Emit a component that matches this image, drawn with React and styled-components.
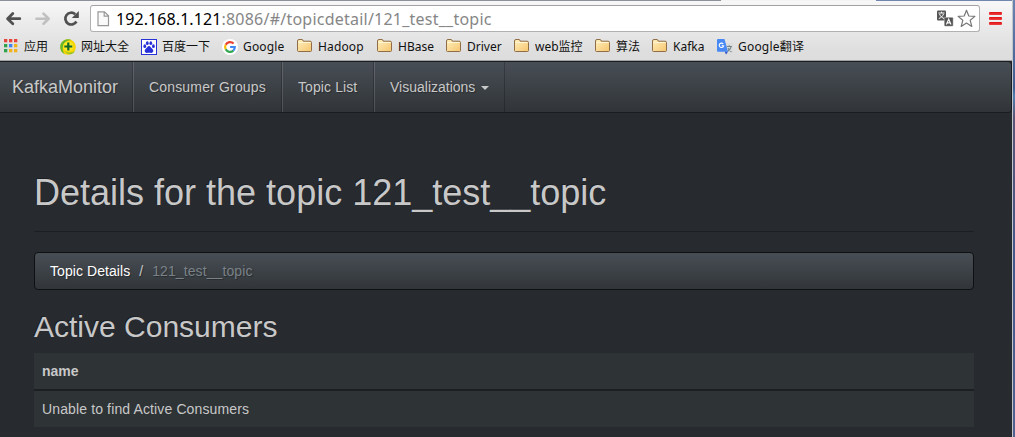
import React from 'react';
import styled, { createGlobalStyle } from 'styled-components';

const Global = createGlobalStyle`
  * { box-sizing: border-box; }
  html, body { margin: 0; padding: 0; overflow: hidden; background: #272b30; }
`;

const slate = 'linear-gradient(#484e55, #3a3f44 60%, #313539)';
const uiFont = '"Noto Sans", "Noto Sans CJK SC", sans-serif';

const Desktop = styled.div`
  width: 1015px;
  height: 437px;
  display: flex;
  padding-right: 1px;
  background: linear-gradient(#6b84b0, #3f5d92 20%, #4d7fb0 22%, #5a5475 27%, #46588a 60%, #52618e);
`;

const Window = styled.div`
  width: 1013px;
  height: 437px;
  display: flex;
  flex-direction: column;
  border-right: 1px solid #c3c6cc;
  background: #272b30;
`;

const Chrome = styled.header`
  height: 61px;
  flex: none;
  border-bottom: 1px solid #a2a2a4;
  background: linear-gradient(#f8f8f8, #eeeeee 30%, #dedede 85%, #dddddd);
  font-family: ${uiFont};
`;

const TabEdge = styled.div`
  height: 1px;
  background: linear-gradient(90deg, #8b909b 0 721px, #f4f4f4 721px 876px, #7285ad 876px);
`;

const Toolbar = styled.div`
  height: 33px;
  padding: 4px 9px 0 5px;
  display: flex;
  align-items: flex-start;
`;

const Controls = styled.div`
  width: 85px;
  display: flex;
  gap: 12px;
  padding-top: 5px;
`;

const Omnibox = styled.div`
  width: 890px;
  height: 27px;
  padding: 0 3px 0 6px;
  display: flex;
  align-items: center;
  border: 1px solid #b1b1b3;
  border-top-color: #a2a2a4;
  border-radius: 3px;
  background: #fff;
`;

const Url = styled.span`
  flex: 1;
  margin-left: 6px;
  font-size: 16px;
  line-height: 24px;
  letter-spacing: 0.23px;
  white-space: nowrap;
  color: #868686;
`;

const Host = styled.span`
  letter-spacing: 0.08px;
  color: #000;
`;

const MenuIcon = styled.div`
  width: 13px;
  height: 13px;
  margin: 7px 0 0 9px;
  display: flex;
  flex-direction: column;
  justify-content: space-between;
`;

const MenuBar = styled.i`
  height: 3px;
  border-radius: 1px;
  background: linear-gradient(#e00d10, #ee4141);
`;

const Bookmarks = styled.nav`
  height: 25px;
  padding-left: 3px;
  display: flex;
  gap: 12px;
  align-items: center;
`;

const Bookmark = styled.div`
  display: flex;
  gap: 5px;
  align-items: center;
  height: 16px;
  svg { flex: none; display: block; }
`;

const Label = styled.span`
  width: ${(p) => p.$w}px;
  padding-left: ${(p) => (p.$nudge ? 1 : 0)}px;
  font-size: 12px;
  line-height: 16px;
  letter-spacing: ${(p) => p.$ls || 0}px;
  white-space: nowrap;
  color: #111;
`;

const Page = styled.main`
  flex: 1;
  min-height: 0;
  overflow: hidden;
  font-family: "Liberation Sans", Arial, sans-serif;
  font-size: 14px;
  line-height: 20px;
  color: #c8c8c8;
`;

const Navbar = styled.nav`
  width: 1012px;
  height: 52px;
  display: flex;
  border: 1px solid #1a1c1f;
  border-left: 0;
  border-radius: 0 4px 4px 0;
  background: ${slate};
  text-shadow: 1px 1px 1px rgba(0, 0, 0, 0.3);
`;

const Brand = styled.a`
  width: 133px;
  padding: 15px 0 0 12px;
  font-size: 18px;
  border-right: 1px solid rgba(0, 0, 0, 0.2);
`;

const NavItem = styled.a`
  width: ${(p) => p.$w}px;
  padding: 15px 0 0 15px;
  display: flex;
  letter-spacing: ${(p) => p.$ls || 0}px;
  border-left: 1px solid rgba(255, 255, 255, 0.14);
  border-right: 1px solid rgba(0, 0, 0, 0.22);
  white-space: nowrap;
`;

const Caret = styled.i`
  width: 8px;
  height: 4px;
  margin: 9px 0 0 6px;
  border: 4px solid transparent;
  border-top-color: #c8c8c8;
  border-bottom: 0;
`;

const Content = styled.section`
  width: 974px;
  padding: 60px 0 0 34px;
`;

const Title = styled.h1`
  height: 59px;
  margin: 0 0 20px;
  border-bottom: 1px solid #1c1e22;
  font-size: 36px;
  line-height: 40px;
  font-weight: 400;
  text-shadow: -1px -1px 0 rgba(0, 0, 0, 0.3);
`;

const Breadcrumb = styled.div`
  height: 38px;
  padding: 8px 14px;
  display: flex;
  border: 1px solid #0f1012;
  border-radius: 4px;
  background: ${slate};
  text-shadow: 1px 1px 1px rgba(0, 0, 0, 0.3);
  white-space: nowrap;
`;

const Crumb = styled.span`
  margin-left: 1px;
  letter-spacing: 0.07px;
  color: #fff;
`;

const Slash = styled.span`
  margin: 0 9px;
`;

const CurrentCrumb = styled.span`
  letter-spacing: 0.1px;
  color: #7a8288;
`;

const Subtitle = styled.h2`
  margin: 20px 0 9px;
  font-size: 30px;
  line-height: 34px;
  font-weight: 400;
  text-shadow: -1px -1px 0 rgba(0, 0, 0, 0.3);
`;

const Table = styled.table`
  width: 100%;
  border-collapse: collapse;
  background: #2e3336;
`;

const Th = styled.th`
  height: 37px;
  padding: 7px 8px 8px;
  text-align: left;
  border-bottom: 2px solid #1c1e22;
`;

const Td = styled.td`
  height: 37px;
  padding: 8px;
  letter-spacing: 0.13px;
`;

const BackIcon = () => (
  <svg width="17" height="18" viewBox="0 0 17 18" fill="none" stroke="#505050" strokeWidth="2.8" strokeLinecap="round" strokeLinejoin="round">
    <path d="M7.8 3.6L2.6 8.7L7.8 13.8M3 8.7H14.8" />
  </svg>
);

const ForwardIcon = () => (
  <svg width="17" height="18" viewBox="0 0 17 18" fill="none" stroke="#c0c0c0" strokeWidth="2.6" strokeLinecap="round" strokeLinejoin="round">
    <path d="M9.5 3.6L14.7 8.7L9.5 13.8M14.3 8.7H2.5" />
  </svg>
);

const ReloadIcon = () => (
  <svg width="17" height="18" viewBox="0 0 17 18">
    <path d="M13.4 11.5A5.9 5.9 0 1 1 12.2 4.2" fill="none" stroke="#505050" strokeWidth="2.7" />
    <path d="M15.8 1V8H8.8Z" fill="#505050" />
  </svg>
);

const FileIcon = () => (
  <svg width="13" height="16" viewBox="0 0 13 16" fill="#fafafa" stroke="#989898" strokeWidth="1.2">
    <path d="M1 .8H7.5L11.5 4.8V14.7H1ZM7.2 1V5.2H11.5" />
  </svg>
);

const TranslateIcon = () => (
  <svg width="17" height="17" viewBox="0 0 17 17">
    <rect x="0" y="0.5" width="9" height="10" rx="1" fill="#555" />
    <path d="M1.5 3H7.5M4.5 1.7V3M2.5 4C3.5 6.5 5 7.7 7.2 8.5M6.5 4C5.5 6.5 4 7.7 1.8 8.5" stroke="#fff" strokeWidth="1" fill="none" />
    <rect x="7.2" y="7.3" width="9" height="9" rx="1" fill="#555" stroke="#fff" strokeWidth="0.4" />
    <path d="M9.4 14.5L11.7 9.2L14 14.5M10.2 12.9H13.2" stroke="#fff" strokeWidth="1.1" fill="none" />
  </svg>
);

const StarIcon = () => (
  <svg width="19" height="19" viewBox="0 0 19 19" fill="#fff" stroke="#777" strokeWidth="1.2" strokeLinejoin="round">
    <path d="M9.5 1.2L11.8 7L17.9 7.4L13.2 11.3L14.8 17.4L9.5 14L4.2 17.4L5.8 11.3L1.1 7.4L7.2 7Z" />
  </svg>
);

const PageActions = styled.div`
  display: flex;
  align-items: center;
  gap: 3px;
`;

const appColors = ['#e8453c', '#e8453c', '#e8453c', '#2fa24c', '#3f83f2', '#f2b21b', '#2fa24c', '#f2b21b', '#f2b21b'];
const AppsIcon = () => (
  <svg width="16" height="16" viewBox="0 0 16 16">
    {appColors.map((c, i) => (
      <rect key={i} x={1 + (i % 3) * 5} y={Math.floor(i / 3) * 5} width="3.3" height="3.3" fill={c} />
    ))}
  </svg>
);

const DirectoryIcon = () => (
  <svg width="16" height="16" viewBox="0 0 16 16">
    <circle cx="8" cy="8" r="7.8" fill="#f8d400" />
    <path d="M.2 8A7.8 7.8 0 0 1 12 1.4C8 1 4 3 3 7C2.3 10 3 13 5 15.2A7.8 7.8 0 0 1 .2 8Z" fill="#69b82c" />
    <path d="M15 11.5C12 14.5 8 14.5 4.5 11.5C7 16 13 17 15 11.5Z" fill="#8cc526" />
    <circle cx="8.3" cy="7.5" r="5" fill="#f9ea25" />
    <path d="M8.3 3.5V11.5M4.3 7.5H12.3" stroke="#12682a" strokeWidth="2.2" />
  </svg>
);

const PawIcon = () => (
  <svg width="16" height="16" viewBox="0 0 16 16">
    <rect x=".5" y=".5" width="15" height="15" fill="#fff" stroke="#2932d8" />
    <g fill="#2932d8">
      <ellipse cx="3.8" cy="7.2" rx="1.4" ry="1.9" />
      <ellipse cx="6.3" cy="4.2" rx="1.4" ry="1.9" />
      <ellipse cx="9.8" cy="4.2" rx="1.4" ry="1.9" />
      <ellipse cx="12.4" cy="7.2" rx="1.4" ry="1.9" />
      <path d="M8 7C6.5 7 6.2 8.6 5 9.6C3 11.2 3.5 14 5.8 13.9C7.2 13.8 8.8 13.8 10.2 13.9C12.7 14 13 11.2 11 9.6C9.8 8.6 9.5 7 8 7Z" />
    </g>
  </svg>
);

const GoogleIcon = () => (
  <svg width="16" height="16" viewBox="0 0 16 16" fill="none" strokeWidth="2.2">
    <circle cx="8" cy="8" r="8" fill="#fff" />
    <path d="M11.6 4.6A4.9 4.9 0 0 0 3.7 5.7" stroke="#ea4335" />
    <path d="M3.7 5.7A4.9 4.9 0 0 0 3.7 10.3" stroke="#fbbc05" />
    <path d="M3.7 10.3A4.9 4.9 0 0 0 11.3 11.6" stroke="#34a853" />
    <path d="M11.3 11.6A4.9 4.9 0 0 0 12.8 8H8.1" stroke="#4285f4" />
  </svg>
);

const FolderIcon = () => (
  <svg width="16" height="16" viewBox="0 0 16 16">
    <defs>
      <linearGradient id="folder" x1="0" y1="0" x2="1" y2="1">
        <stop offset="0" stopColor="#fff0bd" />
        <stop offset="1" stopColor="#f6c56f" />
      </linearGradient>
    </defs>
    <path d="M1.5 11.5V2Q1.5 .5 3 .5H6Q7 .5 7.3 2.2H14Q15.5 2.2 15.5 3.5V11.5Q15.5 12.5 14.5 12.5H2.5Q1.5 12.5 1.5 11.5Z" fill="url(#folder)" stroke="#8f6d48" />
    <path d="M2.5 3.5H14.5" stroke="#fff5d4" />
  </svg>
);

const GTranslateIcon = () => (
  <svg width="16" height="16" viewBox="0 0 16 16">
    <path d="M7 4H15Q16 4 16 5V14.5Q16 15.5 15 15.5H9Z" fill="#dcdcdc" />
    <path d="M9.5 7.5H15M12.2 6.2V7.5M14 8C13.5 10 12 11.7 10.5 12.5M11 9C12 11 13 12 14.5 12.7" fill="none" stroke="#71858b" strokeWidth="1.1" />
    <path d="M1 0H7.5L11 12.8H1Q0 12.8 0 12V1Q0 0 1 0Z" fill="#4889f4" />
    <path d="M7.8 12.8H11L9 15.5Z" fill="#3050c8" />
    <path d="M6.2 5A2.2 2.2 0 1 0 6.6 6.8H4.6" fill="none" stroke="#fff" strokeWidth="1.1" />
  </svg>
);

const bookmarks = [
  { Icon: AppsIcon, text: '应用', w: 24 },
  { Icon: DirectoryIcon, text: '网址大全', w: 48 },
  { Icon: PawIcon, text: '百度一下', w: 48 },
  { Icon: GoogleIcon, text: 'Google', w: 41, ls: 0.15 },
  { Icon: FolderIcon, text: 'Hadoop', w: 47, ls: 0.15 },
  { Icon: FolderIcon, text: 'HBase', w: 36 },
  { Icon: FolderIcon, text: 'Driver', w: 35 },
  { Icon: FolderIcon, text: 'web监控', w: 48 },
  { Icon: FolderIcon, text: '算法', w: 24 },
  { Icon: FolderIcon, text: 'Kafka', w: 33 },
  { Icon: GTranslateIcon, text: 'Google翻译', w: 68, ls: 0.2 },
];

export default function App() {
  return (
    <Desktop>
      <Global />
      <Window>
        <Chrome>
          <TabEdge />
          <Toolbar>
            <Controls>
              <BackIcon />
              <ForwardIcon />
              <ReloadIcon />
            </Controls>
            <Omnibox>
              <FileIcon />
              <Url><Host>192.168.1.121</Host>:8086/#/topicdetail/121_test__topic</Url>
              <PageActions>
                <TranslateIcon />
                <StarIcon />
              </PageActions>
            </Omnibox>
            <MenuIcon><MenuBar /><MenuBar /><MenuBar /></MenuIcon>
          </Toolbar>
          <Bookmarks>
            {bookmarks.map(({ Icon, text, w, ls }) => (
              <Bookmark key={text}>
                <Icon />
                <Label $w={w} $ls={ls} $nudge={Icon === FolderIcon}>{text}</Label>
              </Bookmark>
            ))}
          </Bookmarks>
        </Chrome>
        <Page>
          <Navbar>
            <Brand>KafkaMonitor</Brand>
            <NavItem $w={149} $ls={0.17}>Consumer Groups</NavItem>
            <NavItem $w={92} $ls={0.1}>Topic List</NavItem>
            <NavItem $w={131}>Visualizations<Caret /></NavItem>
          </Navbar>
          <Content>
            <Title>Details for the topic 121_test__topic</Title>
            <Breadcrumb>
              <Crumb>Topic Details</Crumb>
              <Slash>/</Slash>
              <CurrentCrumb>121_test__topic</CurrentCrumb>
            </Breadcrumb>
            <Subtitle>Active Consumers</Subtitle>
            <Table>
              <thead><tr><Th>name</Th></tr></thead>
              <tbody><tr><Td>Unable to find Active Consumers</Td></tr></tbody>
            </Table>
          </Content>
        </Page>
      </Window>
    </Desktop>
  );
}
